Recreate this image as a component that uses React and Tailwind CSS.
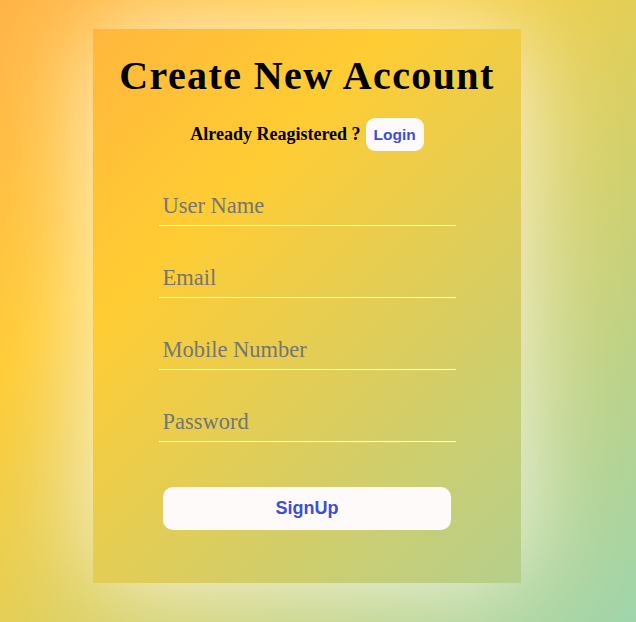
export default function App() {
  const fields = ["User Name", "Email", "Mobile Number", "Password"];
  return (
    <div className="w-[636px] h-[622px] overflow-hidden bg-[linear-gradient(135deg,#ffb347_0%,#ffcc33_30%,#9fd5ac_100%)] pt-[29px] pl-[93px]">
      <div className="w-[428px] h-[554px] bg-[linear-gradient(135deg,#ffb73d_0%,#ffcc33_30%,#b5cf8c_100%)] shadow-[0_0_100px_rgba(255,255,255,0.85)] flex flex-col items-center pt-[23px] font-['Liberation_Serif',serif]">
        <h1 className="text-[40px] leading-[48px] font-bold tracking-[1.4px] text-black">Create New Account</h1>
        <div className="mt-[18px] flex items-center gap-[5px] h-[33px]">
          <span className="text-[18px] font-bold text-black">Already Reagistered ?</span>
          <button className="h-[33px] px-[8px] rounded-[9px] bg-[#fffafa] text-[#3b4fd6] font-bold text-[15.5px] font-['Liberation_Sans',sans-serif]">Login</button>
        </div>
        <div className="mt-[41px] w-[297px] flex flex-col gap-[38px]">
          {fields.map((f) => (
            <input
              key={f}
              type="text"
              placeholder={f}
              className="block w-full h-[34px] pb-[5px] pl-[4px] bg-transparent border-0 border-b border-b-white outline-none text-[22.5px] font-['Liberation_Serif',serif] placeholder:text-[#757575] text-black"
            />
          ))}
        </div>
        <button className="mt-[45px] w-[288px] h-[43px] rounded-[10px] bg-[#fffafa] text-[#3b4fd6] font-bold text-[18px] font-['Liberation_Sans',sans-serif]">SignUp</button>
      </div>
    </div>
  );
}
